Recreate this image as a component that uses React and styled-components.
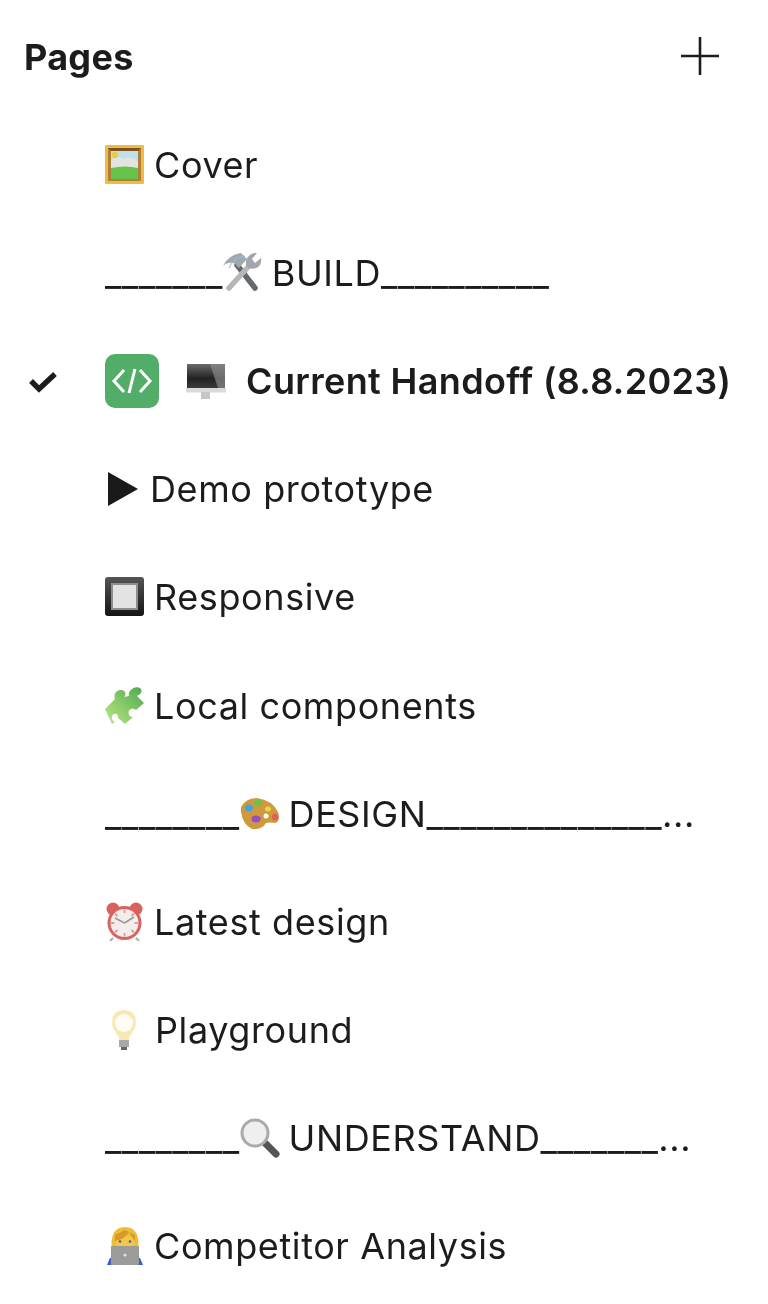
import React from "react";
import styled, { createGlobalStyle } from "styled-components";

const Global = createGlobalStyle`
  html, body { margin: 0; padding: 0; background: #fff; }
  body { font-family: Inter, "Liberation Sans", sans-serif; color: #1c1c1c; }
`;

const Panel = styled.div`
  width: 768px;
  height: 1304px;
  padding-top: 3px;
  box-sizing: border-box;
  overflow: hidden;
  filter: blur(0.6px);
`;
const Header = styled.div`
  height: 108px;
  display: flex;
  align-items: center;
  justify-content: space-between;
  padding: 0 49px 0 24px;
`;
const Title = styled.h1`
  margin: 0;
  font-size: 36px;
  font-weight: 650;
  letter-spacing: 0.3px;
`;
const AddButton = styled.button`
  border: 0;
  padding: 0;
  margin-top: -3px;
  background: none;
  width: 38px;
  height: 38px;
  display: block;
`;
const Row = styled.div`
  height: 108.1px;
  display: flex;
  align-items: center;
  padding-left: ${(p) => (p.$selected ? 28 : 105)}px;
  font-size: 36px;
  letter-spacing: ${(p) => (p.$selected ? 0.35 : 0.6)}px;
  font-weight: ${(p) => (p.$selected ? 600 : 400)};
  white-space: pre;
`;
const Rule = styled.span`
  letter-spacing: 0.4px;
`;
const Emoji = styled.svg`
  flex: none;
  width: ${(p) => p.$w || 39}px;
  height: ${(p) => p.$h || 39}px;
  margin-left: ${(p) => p.$ml || 0}px;
  margin-right: ${(p) => p.$mr ?? 10}px;
  transform: translateY(${(p) => p.$dy || 0}px);
`;
const Check = styled.svg`
  flex: none;
  width: 30px;
  height: 24px;
  margin-right: 47px;
`;
const CodeTile = styled.span`
  flex: none;
  width: 54px;
  height: 54px;
  border-radius: 10px;
  background: #52ad68;
  display: flex;
  align-items: center;
  justify-content: center;
  margin-right: 27px;
`;

const Frame = () => (
  <Emoji viewBox="0 0 39 39" $dy={-1}>
    <rect width="39" height="39" rx="1" fill="#ecbc45" />
    <rect x="3" y="3" width="33" height="33" fill="#b08036" />
    <path d="M3 3 H36 L33 6 H6Z" fill="#7f5222" />
    <rect x="6" y="6" width="27" height="28" fill="#bfe0ea" />
    <path d="M6 16 Q12 9 19 14 Q26 10 33 16 V24 H6Z" fill="#e3e4e0" />
    <circle cx="10" cy="10" r="3.2" fill="#efc846" />
    <path d="M6 23 Q20 20 33 23 V34 H6Z" fill="#66c44a" />
  </Emoji>
);
const Tools = () => (
  <Emoji viewBox="0 0 40 40" $w={40} $h={40} $ml={-1} $mr={10} $dy={-1}>
    <path d="M33 36 L15 13" stroke="#66696c" strokeWidth="5.5" strokeLinecap="round" />
    <path d="M1 14 Q6 3 19 1 L25 7 L17 16 L12 11 Q5 10 1 14Z" fill="#a4a8ac" />
    <path d="M7 16 Q12 5 23 4" stroke="#8fc4dc" strokeWidth="1.6" fill="none" opacity="0.7" />
    <path d="M7 36 L27 14" stroke="#b4b8bb" strokeWidth="5.5" strokeLinecap="round" />
    <path d="M24 8 Q28 0 35 1 L30 7 L33 11 L39 6 Q40 14 34 16 Q28 18 24 14Z" fill="#a3a7ab" />
  </Emoji>
);
const Monitor = () => (
  <Emoji viewBox="0 0 40 36" $w={40} $h={36} $mr={20} $dy={1}>
    <defs>
      <linearGradient id="scr" x1="0" y1="0" x2="0" y2="1">
        <stop offset="0" stopColor="#6a6a6a" />
        <stop offset="0.6" stopColor="#222" />
        <stop offset="1" stopColor="#3a3a3a" />
      </linearGradient>
    </defs>
    <rect x="1" y="0" width="38" height="24" fill="url(#scr)" />
    <path d="M24 0 H39 V24 H32Z" fill="#8a8a8a" opacity="0.7" />
    <rect x="0" y="24" width="40" height="4.5" fill="#dadada" />
    <rect x="15" y="28" width="9" height="7" fill="#c6c6c6" />
  </Emoji>
);
const Play = () => (
  <Emoji viewBox="0 0 30 34" $w={30} $h={34} $ml={3} $mr={12}>
    <path d="M0 0 L30 17 L0 34Z" fill="#1a1a1a" />
  </Emoji>
);
const Square = () => (
  <Emoji viewBox="0 0 39 39" $dy={-1}>
    <defs>
      <linearGradient id="sq" x1="0" y1="0" x2="0" y2="1">
        <stop offset="0" stopColor="#555" />
        <stop offset="1" stopColor="#141414" />
      </linearGradient>
    </defs>
    <rect width="39" height="39" rx="3" fill="url(#sq)" />
    <rect x="6" y="6" width="27" height="27" fill="#8e8e8e" />
    <rect x="8" y="8" width="23" height="23" fill="#e3e3e3" />
  </Emoji>
);
const Puzzle = () => (
  <Emoji viewBox="0 0 39 39">
    <defs>
      <linearGradient id="pz" x1="1" y1="0" x2="0" y2="1">
        <stop offset="0" stopColor="#4fa84f" />
        <stop offset="1" stopColor="#bce884" />
      </linearGradient>
    </defs>
    <path d="M0 23 L10 13 C7 6 16 1 20 6 C21 8 20 10 19 11 L24 10 C22 4 32 -2 36 3 C38 7 34 9 32 10 L39 17 L31 24 C27 21 22 24 24 29 C25 31 27 31 28 31 L20 38 L13 32 C14 28 9 26 7 30 C6 33 8 35 10 36 L7 38 Z" fill="url(#pz)" />
  </Emoji>
);
const Palette = () => (
  <Emoji viewBox="0 0 40 32" $w={40} $h={32} $mr={9}>
    <path d="M1 9 Q6 0 17 0 Q32 2 38 14 Q41 23 35 25 Q30 24 26 25 Q22 32 12 31 Q3 27 1 14Z" fill="#cf9a3c" />
    <ellipse cx="9" cy="10" rx="4" ry="3.5" fill="#3fa6e0" />
    <ellipse cx="18" cy="5" rx="4" ry="3" fill="#68c44a" />
    <ellipse cx="28" cy="11" rx="3" ry="2.5" fill="#ecd24a" />
    <ellipse cx="16" cy="21" rx="4.5" ry="3.5" fill="#9a4cc8" />
    <circle cx="26" cy="18" r="2.5" fill="#fff" />
    <ellipse cx="35" cy="19" rx="3" ry="3.5" fill="#e0605a" />
  </Emoji>
);
const Clock = () => (
  <Emoji viewBox="0 0 37 39" $w={37} $h={39} $ml={1} $mr={11}>
    <circle cx="7" cy="7" r="6.5" fill="#d9615f" />
    <circle cx="30" cy="7" r="6.5" fill="#d9615f" />
    <circle cx="18.5" cy="21" r="17" fill="#d9615f" />
    <circle cx="18.5" cy="21" r="14" fill="#f1eeeb" />
    <path d="M18.5 7.5V11M18.5 31V34.5M5 21H8.5M28.5 21H32M9 11.5L11.5 14M28 11.5L25.5 14M9 30.5L11.5 28M28 30.5L25.5 28" stroke="#e69a96" strokeWidth="1.8" />
    <path d="M18.5 21 L9 16 M18.5 21 L28 15" stroke="#999" strokeWidth="1.5" />
    <path d="M7 36 L4 39 M30 36 L33 39" stroke="#aaa" strokeWidth="2" />
  </Emoji>
);
const Bulb = () => (
  <Emoji viewBox="0 0 26 40" $w={26} $h={40} $ml={6} $mr={18}>
    <path d="M13 0 Q25 0 25 12 Q25 19 18 27 L18 31 H8 L8 27 Q1 19 1 12 Q1 0 13 0Z" fill="#fae8b4" />
    <circle cx="13" cy="13" r="9" fill="#fefcf4" />
    <rect x="8" y="30" width="10" height="7" fill="#a8a8a8" />
    <rect x="10" y="37" width="6" height="3" fill="#666" />
  </Emoji>
);
const Magnifier = () => (
  <Emoji viewBox="0 0 40 40" $w={40} $h={40} $mr={9}>
    <path d="M25 25 L36 36" stroke="#555" strokeWidth="7" strokeLinecap="round" />
    <circle cx="15" cy="15" r="13" fill="#efefef" stroke="#aaa" strokeWidth="3" />
  </Emoji>
);
const Person = () => (
  <Emoji viewBox="0 0 36 38" $w={36} $h={38} $ml={2} $mr={11}>
    <path d="M5 24 Q2 0 18 0 Q34 0 31 24Z" fill="#edbd35" />
    <rect x="9" y="9" width="18" height="13" rx="5" fill="#f5c64a" />
    <path d="M8 14 Q18 12 22 5 Q26 12 28 14 L28 8 L18 3 L8 8Z" fill="#d9982a" />
    <path d="M0 38 L3 31 H33 L36 38Z" fill="#3f5cc8" />
    <rect x="4" y="19" width="28" height="19" rx="1" fill="#9b9b9b" />
    <circle cx="18" cy="28" r="1.6" fill="#ddd" />
    <circle cx="13" cy="14.5" r="1.3" fill="#3a66a8" />
    <circle cx="23" cy="14.5" r="1.3" fill="#3a66a8" />
  </Emoji>
);

const us = (n) => "_".repeat(n);

export default function App() {
  return (
    <>
      <Global />
      <Panel>
        <Header>
          <Title>Pages</Title>
          <AddButton aria-label="Add page">
            <svg width="38" height="38" viewBox="0 0 38 38">
              <path d="M19 0V38M0 19H38" stroke="#1c1c1c" strokeWidth="2.6" fill="none" />
            </svg>
          </AddButton>
        </Header>
        <Row><Frame />Cover</Row>
        <Row><Rule>{us(7)}</Rule><Tools />BUILD<Rule>{us(10)}</Rule></Row>
        <Row $selected>
          <Check viewBox="0 0 30 24">
            <path d="M3 12 L11 20 L27 5" stroke="#1c1c1c" strokeWidth="5.4" fill="none" />
          </Check>
          <CodeTile>
            <svg width="40" height="26" viewBox="0 0 40 26">
              <path d="M12 2 L2 13 L12 24 M28 2 L38 13 L28 24 M23 1 L17 25" stroke="#fff" strokeWidth="3" fill="none" />
            </svg>
          </CodeTile>
          <Monitor />Current Handoff (8.8.2023)
        </Row>
        <Row><Play />Demo prototype</Row>
        <Row><Square />Responsive</Row>
        <Row><Puzzle />Local components</Row>
        <Row><Rule>{us(8)}</Rule><Palette />DESIGN<Rule>{us(14)}</Rule>...</Row>
        <Row><Clock />Latest design</Row>
        <Row><Bulb />Playground</Row>
        <Row><Rule>{us(8)}</Rule><Magnifier />UNDERSTAND<Rule>{us(7)}</Rule>...</Row>
        <Row><Person />Competitor Analysis</Row>
      </Panel>
    </>
  );
}
